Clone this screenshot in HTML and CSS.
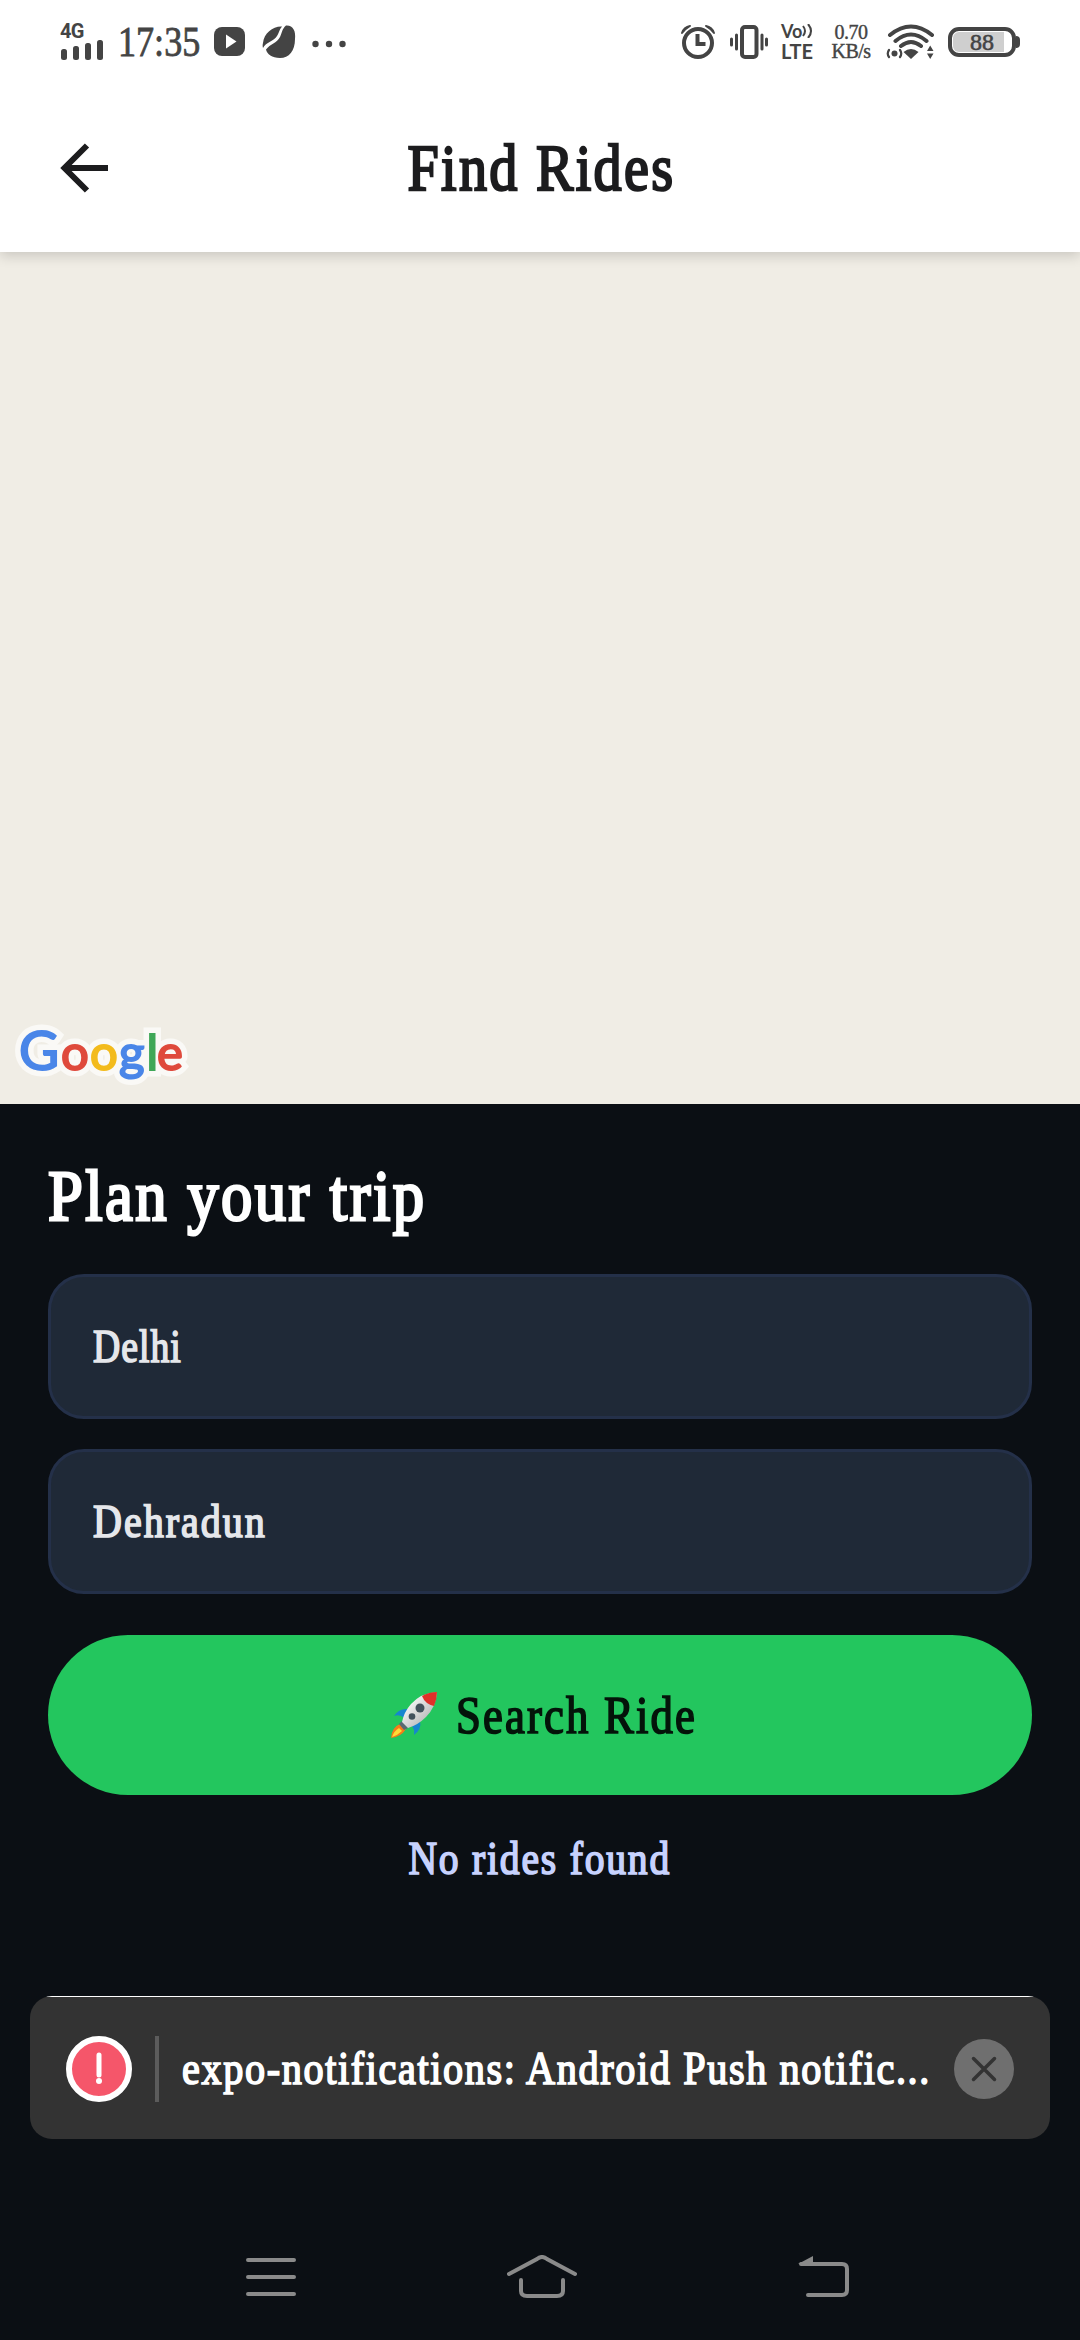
FILE: index.html
```html
<!DOCTYPE html>
<html lang="en">
<head>
<meta charset="utf-8">
<title>Find Rides</title>
<link rel="stylesheet" href="styles.css">
</head>
<body>
<div class="screen">
  <div class="status">
    <div class="signal">
      <span class="net">4G</span>
      <svg width="44" height="21" viewBox="0 0 44 21" fill="#444"><rect x="1" y="10" width="6" height="11" rx="2.5"/><rect x="13" y="7" width="6" height="14" rx="2.5"/><rect x="25" y="4" width="6" height="17" rx="2.5"/><rect x="37" y="1" width="6" height="20" rx="2.5"/></svg>
    </div>
    <span class="clock"><span class="fit">17:35</span></span>
    <svg class="play" width="31" height="30" viewBox="0 0 31 30"><rect width="31" height="29" rx="8" fill="#444"/><path d="M12 7.5v14l10.500-7z" fill="#fff"/></svg>
    <svg class="bean" width="34" height="34" viewBox="0 0 34 34" fill="#444"><path d="M1 18C2 8 11 1 20 1.500C17 5 17 8 15 11C12 16 4 17 1 23C.5 21 .5 20 1 18z"/><path d="M24 .5C31 0 34 6 33 14C33 26 27 33 18 33C10 33 5 29 4 24.500C8 19 15 18 18 12C20 8 20 4 24 .5z"/></svg>
    <svg class="dots" width="34" height="8" viewBox="0 0 34 8" fill="#444"><circle cx="3.500" cy="4" r="3.200"/><circle cx="17" cy="4" r="3.200"/><circle cx="30.500" cy="4" r="3.200"/></svg>
    <div class="status-right">
      <svg width="36" height="36" viewBox="0 0 36 36" fill="none" stroke="#444"><circle cx="18" cy="19" r="14" stroke-width="4"/><path d="M17.500 10v10h8" stroke-width="4"/><path d="M2 9Q4 3 10 2Q5 5 2 9zM34 9Q32 3 26 2Q31 5 34 9z" fill="#444" stroke-width="2" stroke-linejoin="round"/></svg>
      <svg class="vibrate" width="38" height="34" viewBox="0 0 38 34" fill="none" stroke="#444" stroke-linecap="round"><rect x="12" y="2" width="14.500" height="30" rx="3" stroke-width="4"/><path d="M1.500 14v6M6.500 10v14M32 10v14M36.500 14v6" stroke-width="3"/></svg>
      <div class="volte"><span class="vo">Vo<svg width="11" height="14" viewBox="0 0 11 14" fill="none" stroke="#444" stroke-width="2"><path d="M1 2Q5 7 1 12M6 0Q12 7 6 14"/></svg></span><span class="lte">LTE</span></div>
      <div class="speed"><span>0.70</span><span>KB/s</span></div>
      <svg class="wifi" width="50" height="36" viewBox="0 0 50 36" fill="none" stroke="#444" stroke-width="4" stroke-linecap="round"><path d="M4 11Q25-6 46 11M9.500 17Q25 4 40.500 17M15 22Q25 14 35 22"/><path d="M17.500 28Q25 22 32.500 28L25 35z" fill="#444" stroke="none"/><circle cx="8.500" cy="29.500" r="3" fill="#444" stroke="none"/><path d="M3 26Q.5 29.500 3 33M14 26Q16.500 29.500 14 33" stroke-width="2.200"/><path d="M41 27l3.200-5.500L47.500 27zM41 29.500l3.200 5.500 3.300-5.500z" fill="#444" stroke="none"/></svg>
      <div class="battery"><div class="cell"><span>88</span></div><i></i></div>
    </div>
  </div>

  <header class="header">
    <svg class="back" width="50" height="50" viewBox="0 0 50 50" fill="none" stroke="#1c1c1e" stroke-width="6"><path d="M48 25H6M27 2.500L4.500 25 27 47.500"/></svg>
    <h1><span class="fit">Find Rides</span></h1>
  </header>

  <main class="map">
    <svg class="google" width="184" height="72" viewBox="0 0 184 72">
      <g class="halo"><text class="g-cap" x="3" y="50">G</text><text x="45" y="50">o</text><text x="74" y="50">o</text><text x="103" y="50">g</text><text x="130.500" y="50">l</text><text x="141" y="50">e</text></g>
      <g class="ink" aria-hidden="true"><text class="g-cap blue" x="3" y="50">G</text><text class="red" x="45" y="50">o</text><text class="yellow" x="74" y="50">o</text><text class="blue" x="103" y="50">g</text><text class="green" x="130.500" y="50">l</text><text class="red" x="141" y="50">e</text></g>
    </svg>
  </main>

  <section class="panel">
    <h2><span class="fit">Plan your trip</span></h2>
    <div class="field"><span class="fit from">Delhi</span></div>
    <div class="field"><span class="fit to">Dehradun</span></div>
    <div class="search">
      <svg width="46" height="46" viewBox="0 0 46 46">
        <defs><linearGradient id="hull" x1="0" y1="0" x2="1" y2="1"><stop offset=".2" stop-color="#fafafa"/><stop offset=".8" stop-color="#b5b5b5"/></linearGradient></defs>
        <path d="M17 17Q8 16 3 24Q9 22 13 26zM29 29Q31 37 23 43Q24 37 20 33z" fill="#1686cf"/>
        <path d="M9 32Q1 35 0 46Q10 45 15 37z" fill="#f57c19"/><path d="M8 36Q3 39 1 45Q7 43 11 39z" fill="#ffdc36"/>
        <path d="M11 29l6 7-4 2-5-6z" fill="#596973"/>
        <path d="M46 0Q30 1 20 12Q13 20 11 30L17 36Q27 33 35 25Q45 15 46 0z" fill="url(#hull)"/>
        <path d="M46 0Q38 0 31 4Q34 12 43 14Q46 7 46 0z" fill="#df3029"/>
        <circle cx="29" cy="16" r="4.500" fill="#43525c"/><circle cx="21" cy="24.500" r="3.300" fill="#43525c"/>
      </svg>
      <span class="fit">Search Ride</span>
    </div>
    <p class="empty"><span class="fit">No rides found</span></p>
  </section>

  <div class="toast">
    <svg width="66" height="66" viewBox="0 0 66 66"><circle cx="33" cy="33" r="30" fill="#f5566a" stroke="#fff" stroke-width="6"/><path d="M33 19v20" stroke="#fff" stroke-width="5" stroke-linecap="round"/><circle cx="33" cy="45" r="3" fill="#fff"/></svg>
    <div class="rule"></div>
    <div class="message"><span class="fit">expo-notifications: Android Push notific...</span></div>
    <svg width="60" height="60" viewBox="0 0 60 60"><circle cx="30" cy="30" r="30" fill="#6f6f6f"/><path d="M19.500 19.500l21 21M40.500 19.500l-21 21" stroke="#333" stroke-width="3.500" stroke-linecap="round"/></svg>
  </div>

  <nav class="nav">
    <svg width="50" height="38" viewBox="0 0 50 38" stroke="#8a8a8a" stroke-width="4" stroke-linecap="round"><path d="M2 2h46M2 19h46M2 36h46"/></svg>
    <svg class="home" width="70" height="44" viewBox="0 0 70 44" fill="none" stroke="#8a8a8a" stroke-width="4" stroke-linecap="round"><path d="M2 19L30 4Q35 0 40 4L68 19M14 25V36Q14 41 20 41H50Q56 41 56 36V25"/></svg>
    <svg width="52" height="42" viewBox="0 0 52 42" fill="none" stroke="#8a8a8a" stroke-width="4" stroke-linecap="round"><path d="M3 8H44Q49 8 49 13V34Q49 39 44 39H10"/><path d="M0 8L15 0V8z" fill="#8a8a8a" stroke="none"/></svg>
  </nav>
</div>
</body>
</html>
```
FILE: styles.css
```css
* { box-sizing: border-box; }

body {
  margin: 0;
  background: #0b0f14;
  font-family: "Liberation Serif", serif;
  font-variant-ligatures: none;
}

svg { display: block; flex: none; }

.screen {
  width: 1080px;
  height: 2340px;
  display: flex;
  flex-direction: column;
}

/* Condensed, loosely spaced serif lettering */
.fit {
  display: inline-block;
  white-space: nowrap;
  transform-origin: left center;
  -webkit-text-stroke: 1.7px currentColor;
}

.status {
  position: relative;
  z-index: 2;
  height: 84px;
  flex: none;
  display: flex;
  align-items: center;
  padding: 0 60px;
  background: #fff;
  color: #444;
}

.signal {
  display: flex;
  flex-direction: column;
  width: 44px;
  height: 36px;
}

.net {
  font: bold 20px/15px "Roboto", sans-serif;
  height: 15px;
  letter-spacing: -.8px;
}

.clock {
  width: 80px;
  margin-left: 14px;
  font-size: 43px;
  line-height: 50px;
}

.clock .fit { transform: scaleX(.84); -webkit-text-stroke-width: .8px; }
.play { margin-left: 16px; }
.bean { margin-left: 17px; }
.dots { margin-left: 16px; margin-top: 3px; }

.status-right {
  margin-left: auto;
  display: flex;
  align-items: center;
}

.vibrate { margin-left: 14px; }

.volte {
  width: 36px;
  margin-left: 13px;
  display: flex;
  flex-direction: column;
  font-family: "Lato", sans-serif;
  font-weight: bold;
}

.vo { display: flex; align-items: center; font-size: 18px; line-height: 17px; }
.lte { font-size: 20px; line-height: 22px; }

.speed {
  width: 40px;
  margin-left: 14px;
  display: flex;
  flex-direction: column;
  align-items: center;
  font-size: 20px;
  line-height: 19px;
  letter-spacing: -.5px;
  -webkit-text-stroke: .4px currentColor;
}

.wifi { margin-left: 15px; }

.battery { display: flex; align-items: center; margin-left: 12px; }

.cell {
  width: 68px;
  height: 30px;
  border: 4px solid #444;
  border-radius: 11px;
  background: linear-gradient(90deg, #cfcfcf 51px, #fff 51px) content-box;
  padding: 1px;
  text-align: center;
  font-size: 24px;
  line-height: 20px;
  -webkit-text-stroke: .6px currentColor;
}

.battery i { width: 4px; height: 12px; background: #444; border-radius: 0 4px 4px 0; }

.header {
  position: relative;
  z-index: 1;
  height: 168px;
  flex: none;
  display: flex;
  align-items: center;
  padding: 0 60px;
  background: #fff;
  color: #1c1c1e;
  box-shadow: 0 4px 12px rgba(0, 0, 0, .16);
}

.header h1 {
  flex: 1;
  margin: 0 48px 0 0;
  text-align: center;
  font-size: 66px;
  font-weight: normal;
  line-height: 80px;
}

.header .fit {
  transform: scaleX(.85);
  transform-origin: center;
  letter-spacing: 2.7px;
  -webkit-text-stroke-width: 2.4px;
}

.map {
  height: 852px;
  flex: none;
  display: flex;
  align-items: flex-end;
  padding: 0 0 12px 16px;
  background: #f0ede5;
}

.google { font: 49px "Lato", sans-serif; overflow: visible; }
.google .g-cap { font-size: 55px; }
.google .halo { fill: #faf9f6; stroke: #faf9f6; stroke-width: 13px; }
.google .ink text { stroke-width: 2px; }
.google .blue { fill: #4a86e8; stroke: #4a86e8; }
.google .red { fill: #df4a3c; stroke: #df4a3c; }
.google .yellow { fill: #f3bb1c; stroke: #f3bb1c; }
.google .green { fill: #3fa757; stroke: #3fa757; }

.panel {
  display: flex;
  flex-direction: column;
  padding: 44px 48px 0;
}

.panel h2 {
  margin: 0 0 32px;
  color: #fff;
  font-size: 72px;
  font-weight: normal;
  line-height: 96px;
  height: 94px;
}

.panel h2 .fit { transform: scaleX(.87); letter-spacing: 2.8px; -webkit-text-stroke-width: 2.8px; }

.field {
  height: 145px;
  margin-bottom: 30px;
  display: flex;
  align-items: center;
  padding: 0 42px;
  border: 3px solid #243049;
  border-radius: 36px;
  background: #1f2937;
  color: #e5e7eb;
  font-size: 46px;
}

.from { transform: scaleX(.82); letter-spacing: 1.2px; }
.to { transform: scaleX(.87); letter-spacing: 2.3px; }

.search {
  height: 160px;
  margin-top: 11px;
  display: flex;
  align-items: center;
  gap: 19px;
  padding-left: 343px;
  border-radius: 80px;
  background: #23c65e;
  color: #04140a;
  font-size: 52px;
}

.search .fit { transform: scaleX(.86); letter-spacing: 2.5px; }

.empty {
  margin: 34px 0 0;
  text-align: center;
  color: #c7d2fe;
  font-size: 46px;
  line-height: 60px;
}

.empty .fit { transform: scaleX(.86); transform-origin: center; letter-spacing: 2.1px; }

.toast {
  height: 143px;
  flex: none;
  margin: 107px 30px 0;
  display: flex;
  align-items: center;
  padding: 2px 36px 0;
  border-radius: 22px;
  background: linear-gradient(#fff, #fff) 14px 0 / 992px 1px no-repeat #333;
  color: #fff;
}

.rule { width: 4px; height: 66px; margin-left: 23px; background: #5c5c5c; }

.message {
  flex: 1;
  min-width: 0;
  margin-left: 23px;
  font-size: 46px;
}

.message .fit { transform: scaleX(.875); letter-spacing: 1.84px; }

.nav {
  height: 126px;
  flex: none;
  margin-top: auto;
  display: flex;
  align-items: center;
  justify-content: space-between;
  padding: 0 230px 0 246px;
}

.home { margin-right: 10px; }
```
